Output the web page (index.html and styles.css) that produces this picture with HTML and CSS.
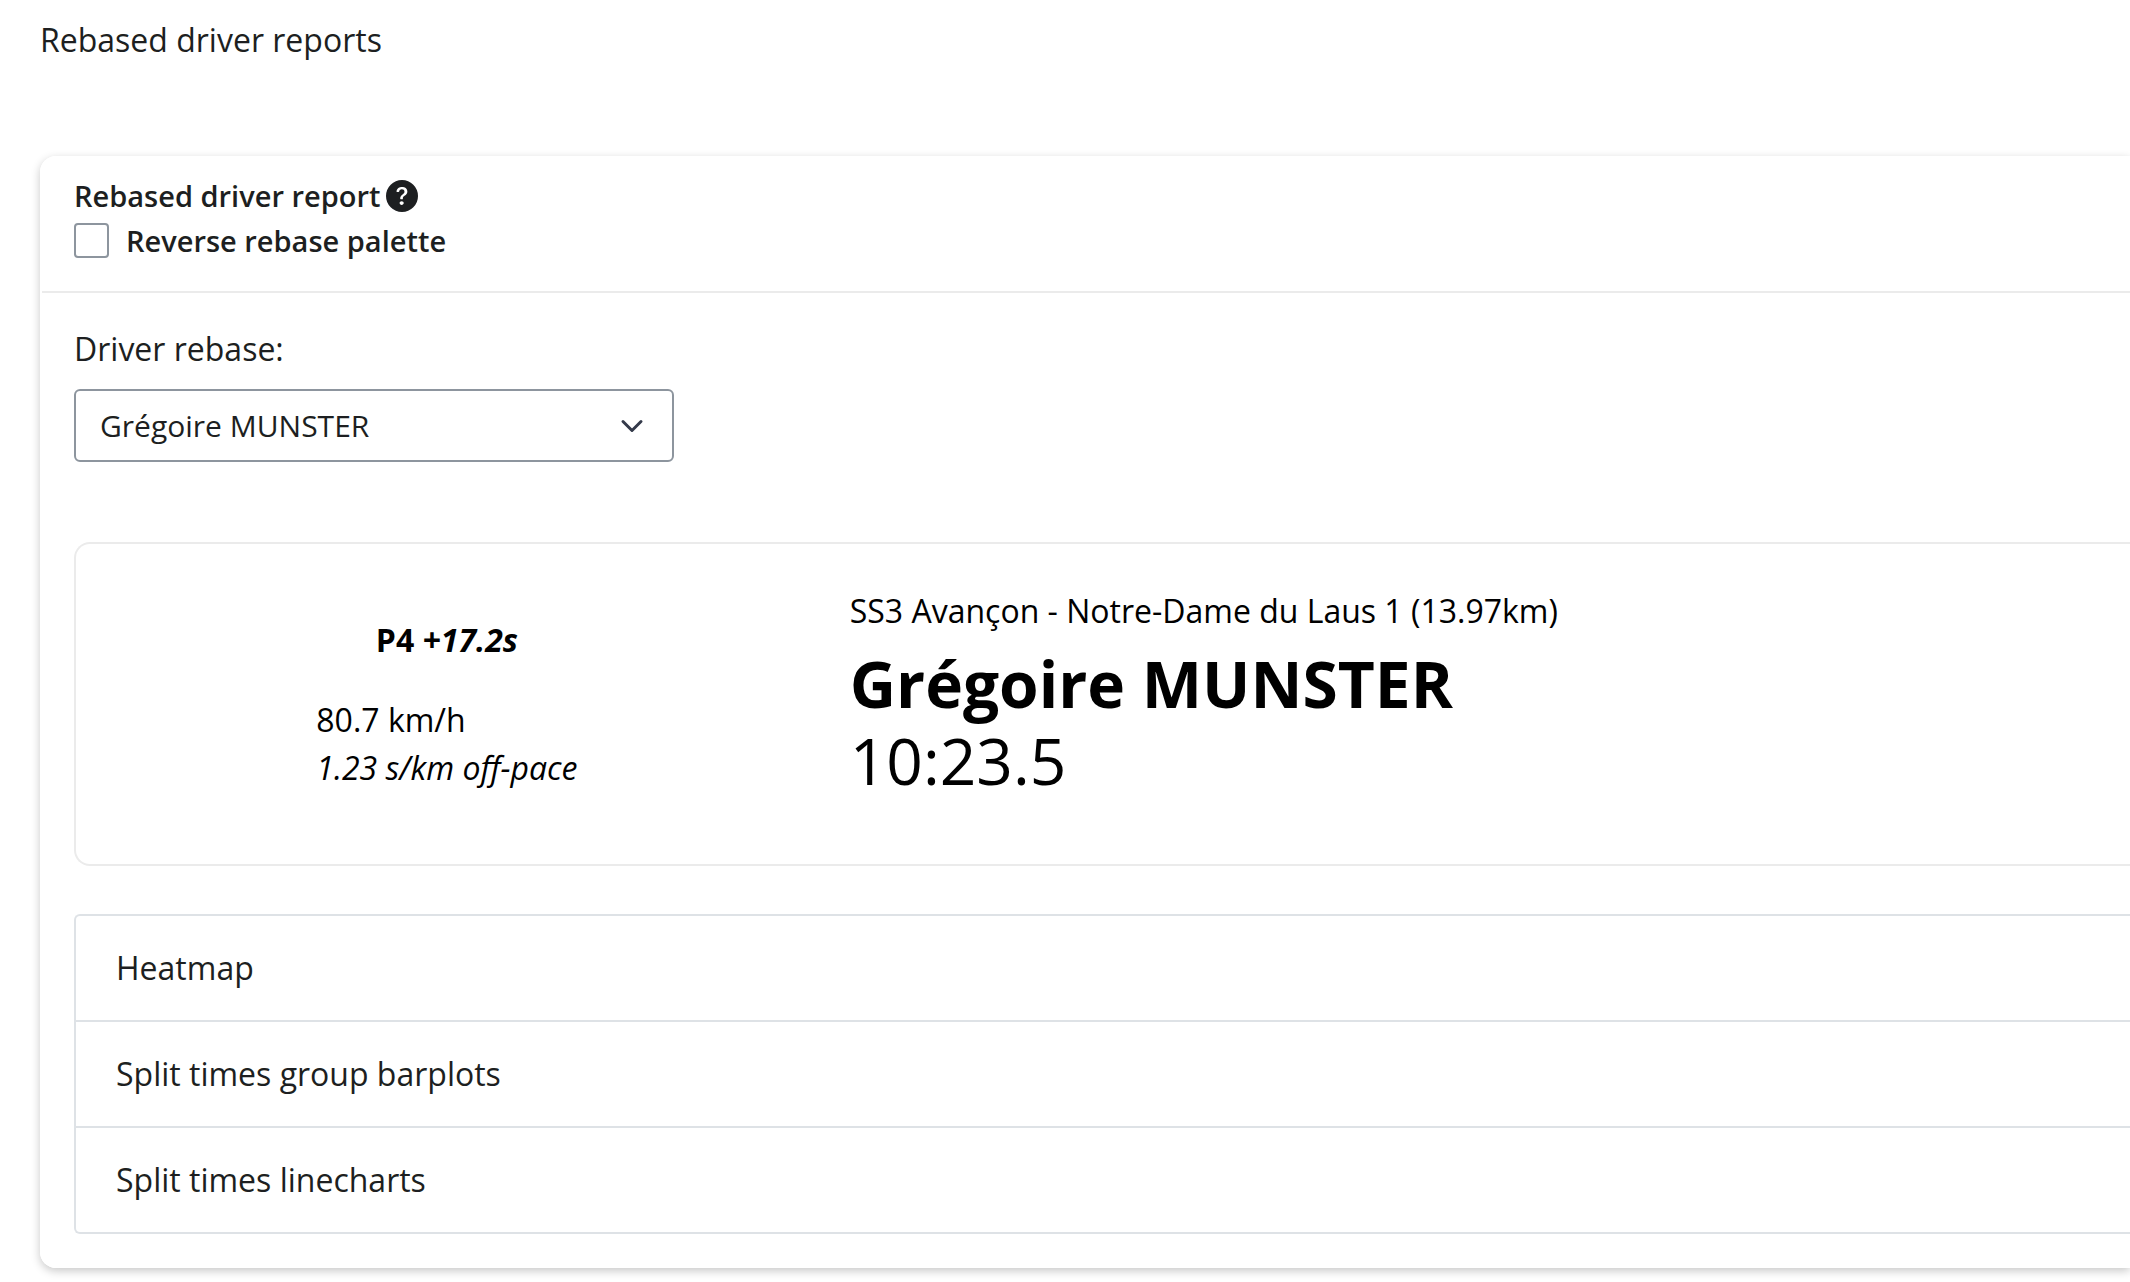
FILE: index.html
```html
<!DOCTYPE html>
<html lang="en">
<head>
<meta charset="utf-8">
<title>Rebased driver reports</title>
<link rel="stylesheet" href="styles.css">
</head>
<body>
<main class="page">
  <p class="page-title">Rebased driver reports</p>
  <section class="card">
    <header class="card-header">
      <div class="card-title">
        <span>Rebased driver report</span>
        <button class="help" type="button" aria-label="Help">
          <svg viewBox="0 0 16 16" aria-hidden="true"><path fill="currentColor" d="M16 8A8 8 0 1 1 0 8a8 8 0 0 1 16 0M5.496 6.033h.825c.138 0 .248-.113.266-.25.09-.656.54-1.134 1.342-1.134.686 0 1.314.343 1.314 1.168 0 .635-.374.927-.965 1.371-.673.489-1.206 1.06-1.168 1.987l.003.217a.25.25 0 0 0 .25.246h.811a.25.25 0 0 0 .25-.25v-.105c0-.718.273-.927 1.01-1.486.609-.463 1.244-.977 1.244-2.056 0-1.511-1.276-2.241-2.673-2.241-1.267 0-2.655.59-2.75 2.286a.237.237 0 0 0 .241.247m2.325 6.443c.61 0 1.029-.394 1.029-.927 0-.552-.42-.94-1.029-.94-.584 0-1.009.388-1.009.94 0 .533.425.927 1.01.927z"/></svg>
        </button>
      </div>
      <label class="check"><input class="check-box" type="checkbox"><span>Reverse rebase palette</span></label>
    </header>
    <div class="card-body">
      <label class="field-label" for="driver">Driver rebase:</label>
      <div class="select-wrap">
        <select class="select" id="driver"><option>Grégoire MUNSTER</option></select>
        <svg class="chevron" viewBox="0 0 16 16" aria-hidden="true"><path fill="none" stroke="currentColor" stroke-linecap="round" stroke-linejoin="round" stroke-width="2" d="m2 5 6 6 6-6"/></svg>
      </div>
      <article class="value-box">
        <div class="showcase">
          <div class="showcase-content">
            <p class="position"><strong>P4 <em>+17.2s</em></strong></p>
            <p class="pace">80.7 km/h<br><em>1.23 s/km off-pace</em></p>
          </div>
        </div>
        <div class="value-area">
          <p class="stage">SS3 Avançon - Notre-Dame du Laus 1 (13.97km)</p>
          <h2 class="driver">Grégoire MUNSTER</h2>
          <p class="time">10:23.5</p>
        </div>
      </article>
      <div class="accordion">
        <button class="accordion-item" type="button">Heatmap</button>
        <button class="accordion-item" type="button">Split times group barplots</button>
        <button class="accordion-item" type="button">Split times linecharts</button>
      </div>
    </div>
  </section>
</main>
</body>
</html>
```
FILE: styles.css
```css
* {
  box-sizing: border-box;
}

body {
  margin: 0;
  background: #fff;
  color: #1d1f21;
  font-family: "Open Sans", "Noto Sans", sans-serif;
  font-size: 32px;
  line-height: 48px;
}

p,
h2 {
  margin: 0;
}

button,
select {
  color: inherit;
  font: inherit;
}

.page {
  padding: 16px 0 14px 40px;
}

.page-title {
  margin-bottom: 92px;
}

.card {
  border: 2px solid #fff;
  border-right: 0;
  border-radius: 16px 0 0 16px;
  box-shadow: 0 3px 10px rgba(0, 0, 0, 0.22);
}

.card-header {
  padding: 15px 32px 28px;
  border-bottom: 2px solid #ebebeb;
  font-size: 29px;
  font-weight: 600;
  line-height: 45px;
}

.card-title {
  display: flex;
  align-items: center;
  gap: 6px;
}

.help {
  display: flex;
  padding: 0;
  border: 0;
  background: none;
}

.help svg {
  width: 32px;
  height: 32px;
}

.check {
  display: flex;
  width: fit-content;
  align-items: center;
  gap: 17px;
}

.check-box {
  width: 35px;
  height: 35px;
  margin: 0;
  appearance: none;
  border: 2px solid #8d959e;
  border-radius: 4px;
  background: #fff;
}

.card-body {
  padding: 32px 0 32px 32px;
}

.field-label {
  display: block;
  margin-bottom: 16px;
}

.select-wrap {
  display: grid;
  max-width: 600px;
  align-items: center;
}

.select {
  grid-area: 1 / 1;
  width: 100%;
  padding: 12px 72px 12px 24px;
  appearance: none;
  border: 2px solid #8d959e;
  border-radius: 6px;
  background: #fff;
  font-size: 30px;
  line-height: 45px;
}

.chevron {
  grid-area: 1 / 1;
  width: 24px;
  height: 24px;
  margin-right: 30px;
  justify-self: end;
  color: #343a4a;
  pointer-events: none;
}

.value-box {
  display: grid;
  grid-template-columns: 13fr 23fr;
  margin: 80px 0 48px;
  border: 2px solid #ebebeb;
  border-right: 0;
  border-radius: 16px 0 0 16px;
  color: #000;
}

.showcase {
  display: flex;
  align-items: center;
  justify-content: center;
}

.position {
  margin-bottom: 32px;
  text-align: center;
}

.value-area {
  padding: 43px 32px 65px;
}

.stage {
  margin-bottom: 10px;
}

.driver,
.time {
  font-size: 64px;
  line-height: 77px;
}

.driver {
  font-weight: 700;
}

.accordion {
  display: flex;
  flex-direction: column;
  border: 2px solid #dee2e6;
  border-right: 0;
  border-radius: 6px 0 0 6px;
}

.accordion-item {
  padding: 28px 40px;
  border: 0;
  background: none;
  text-align: left;
}

.accordion-item + .accordion-item {
  border-top: 2px solid #dee2e6;
}
```
